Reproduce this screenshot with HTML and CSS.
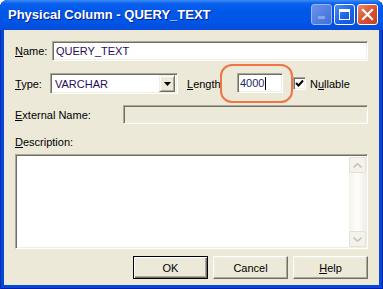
FILE: index.html
```html
<!DOCTYPE html>
<html>
<head lang="en">
    <meta charset="UTF-8">
    <title>Physical Column - QUERY_TEXT</title>
    <link rel="stylesheet" href="styles.css">
</head>
<body>
    <div class="window">
        <div class="titlebar">
            <span class="title">Physical Column - QUERY_TEXT</span>
            <div class="tbtns">
                <span class="tbtn min"><i></i></span>
                <span class="tbtn max"><i></i></span>
                <span class="tbtn close">
                    <svg width="13" height="13" viewBox="0 0 13 13"><path d="M2 2L11 11M11 2L2 11" stroke="#fff" stroke-width="2.2" stroke-linecap="square"/></svg>
                </span>
            </div>
        </div>
        <div class="client">
            <div class="row row-name">
                <label class="lbl name-lbl"><u>N</u>ame:</label>
                <div class="field name-field">QUERY_TEXT</div>
            </div>
            <div class="row row-type">
                <label class="lbl type-lbl"><u>T</u>ype:</label>
                <div class="field combo">
                    <span class="combo-text">VARCHAR</span>
                    <span class="drop">
                        <svg width="7" height="4" viewBox="0 0 7 4"><path d="M0 0H7L3.5 4Z" fill="#000"/></svg>
                    </span>
                </div>
                <label class="lbl len-lbl"><u>L</u>ength</label>
                <div class="field len-field">4000<span class="caret"></span></div>
                <span class="check">
                    <svg width="9" height="9" viewBox="0 0 9 9"><path d="M1 4L3.5 6.5L8 1.5" stroke="#000" stroke-width="2" fill="none"/></svg>
                </span>
                <label class="lbl">N<u>u</u>llable</label>
            </div>
            <div class="row row-ext">
                <label class="lbl ext-lbl"><u>E</u>xternal Name:</label>
                <div class="field ext-field"></div>
            </div>
            <div class="row row-desc">
                <label class="lbl"><u>D</u>escription:</label>
            </div>
            <div class="field desc">
                <div class="desc-text"></div>
                <div class="vscroll">
                    <span class="sbtn">
                        <svg width="9" height="5" viewBox="0 0 9 5"><path d="M0.5 4.5L4.5 0.8L8.5 4.5" stroke="#c9c6b8" stroke-width="1.6" fill="none"/></svg>
                    </span>
                    <span class="track"></span>
                    <span class="sbtn">
                        <svg width="9" height="5" viewBox="0 0 9 5"><path d="M0.5 0.5L4.5 4.2L8.5 0.5" stroke="#c9c6b8" stroke-width="1.6" fill="none"/></svg>
                    </span>
                </div>
            </div>
            <div class="row row-btns">
                <button class="btn default">OK</button>
                <button class="btn">Cancel</button>
                <button class="btn"><u>H</u>elp</button>
            </div>
            <div class="ring"></div>
        </div>
    </div>
</body>
</html>
```

FILE: styles.css
```css
*{
    margin: 0;
    padding: 0;
    box-sizing: border-box;
}
body{
    width: 383px;
    height: 289px;
    background: #ffffff;
    font-family: "Liberation Sans", Arial, sans-serif;
    font-size: 11px;
    color: #000000;
    overflow: hidden;
}
.window{
    width: 383px;
    height: 289px;
    display: flex;
    flex-direction: column;
    background: #0846d8;
    border-radius: 8px 8px 0 0;
    box-shadow: inset 1px 0 #0831b5, inset -1px 0 #0020a8, inset 0 -1px #0020a8;
}
.titlebar{
    height: 30px;
    display: flex;
    align-items: center;
    justify-content: space-between;
    padding: 0 5px 0 8px;
    border-radius: 8px 8px 0 0;
    background: linear-gradient(#3d8cf5 0%, #0a61ee 12%, #0058ea 35%, #0056e6 70%, #0350e0 90%, #0a4ad8 100%);
}
.title{
    color: #ffffff;
    font-weight: bold;
    font-size: 13px;
    text-shadow: 1px 1px #0a1e8c;
    padding-bottom: 1px;
}
.tbtns{
    display: flex;
    gap: 2px;
    padding-bottom: 1px;
}
.tbtn{
    width: 21px;
    height: 21px;
    border: 1px solid #ffffff;
    border-radius: 3px;
    display: flex;
    align-items: center;
    justify-content: center;
    position: relative;
}
.min{
    background: linear-gradient(135deg, #6b93e8, #3f6fdc);
    border-color: #9cb7ef;
}
.min i{
    position: absolute;
    left: 6px;
    bottom: 5px;
    width: 7px;
    height: 3px;
    background: #86a6e9;
}
.max{
    background: linear-gradient(135deg, #4f8cf7, #1a5fe6 60%, #1556d8);
}
.max i{
    width: 11px;
    height: 11px;
    border: 1px solid #ffffff;
    border-top-width: 3px;
}
.close{
    background: linear-gradient(135deg, #ea8a6c, #d9502c 55%, #c8401e);
}
.client{
    flex: 1;
    margin: 0 4px 4px 4px;
    background: #ece9d8;
    position: relative;
    padding: 11px 11px 0 11px;
    display: flex;
    flex-direction: column;
}
.row{
    display: flex;
    align-items: center;
}
.lbl{
    white-space: nowrap;
}
.field{
    background: #ffffff;
    border: 1px solid;
    border-color: #aca899 #ffffff #ffffff #aca899;
    box-shadow: inset 1px 1px #716f64, inset -1px -1px #f1efe2;
}
.row-name{
    height: 20px;
}
.name-lbl{
    width: 37px;
}
.name-field{
    flex: 1;
    height: 20px;
    padding: 3px 0 0 3px;
    color: #2a0a5a;
}
.row-type{
    margin-top: 12px;
    height: 21px;
}
.type-lbl{
    width: 35px;
}
.combo{
    width: 128px;
    height: 21px;
    display: flex;
    align-items: center;
    padding: 2px;
    justify-content: space-between;
}
.combo-text{
    padding-left: 2px;
    color: #2a0a5a;
}
.drop{
    width: 16px;
    height: 17px;
    background: #ece9d8;
    border: 1px solid;
    border-color: #f1efe2 #716f64 #716f64 #f1efe2;
    box-shadow: inset 1px 1px #ffffff, inset -1px -1px #aca899;
    display: flex;
    align-items: center;
    justify-content: center;
}
.len-lbl{
    margin-left: 9px;
    width: 32px;
}
.len-field{
    margin-left: 18px;
    width: 46px;
    height: 20px;
    margin-top: -2px;
    padding: 3px 0 0 2px;
    color: #1a2a6a;
    display: flex;
    align-items: flex-start;
}
.caret{
    display: inline-block;
    width: 1px;
    height: 13px;
    background: #000000;
    margin-left: 1px;
}
.check{
    margin-left: 10px;
    margin-right: 4px;
    width: 13px;
    height: 13px;
    background: #ffffff;
    border: 1px solid;
    border-color: #aca899 #ffffff #ffffff #aca899;
    box-shadow: inset 1px 1px #716f64, inset -1px -1px #f1efe2;
    display: flex;
    align-items: center;
    justify-content: center;
}
.row-ext{
    margin-top: 11px;
    height: 19px;
}
.ext-lbl{
    width: 108px;
}
.ext-field{
    flex: 1;
    height: 19px;
    background: #ece9d8;
}
.row-desc{
    margin-top: 11px;
    height: 13px;
}
.desc{
    margin-top: 6px;
    height: 95px;
    display: flex;
    padding: 2px 1px 1px 2px;
}
.desc-text{
    flex: 1;
}
.vscroll{
    width: 17px;
    display: flex;
    flex-direction: column;
    background: linear-gradient(90deg, #f3f1ec, #fefefb 50%, #f0eee6);
}
.sbtn{
    width: 17px;
    height: 16px;
    border: 1px solid #e4e1d6;
    border-radius: 2px;
    background: #f4f2ea;
    display: flex;
    align-items: center;
    justify-content: center;
}
.track{
    flex: 1;
}
.row-btns{
    margin-top: 7px;
    justify-content: flex-end;
    gap: 5px;
}
.btn{
    width: 75px;
    height: 23px;
    font-family: "Liberation Sans", Arial, sans-serif;
    font-size: 11px;
    color: #000000;
    background: #ece9d8;
    border: 1px solid;
    border-color: #ffffff #716f64 #716f64 #ffffff;
    box-shadow: inset -1px -1px #aca899, inset 1px 1px #f1efe2;
}
.default{
    border: 1px solid #000000;
    box-shadow: inset 1px 1px #ffffff, inset -1px -1px #716f64, inset -2px -2px #aca899;
}
.ring{
    position: absolute;
    left: 216px;
    top: 34px;
    width: 73px;
    height: 39px;
    border: 2px solid #f07444;
    border-radius: 12px;
}
```
